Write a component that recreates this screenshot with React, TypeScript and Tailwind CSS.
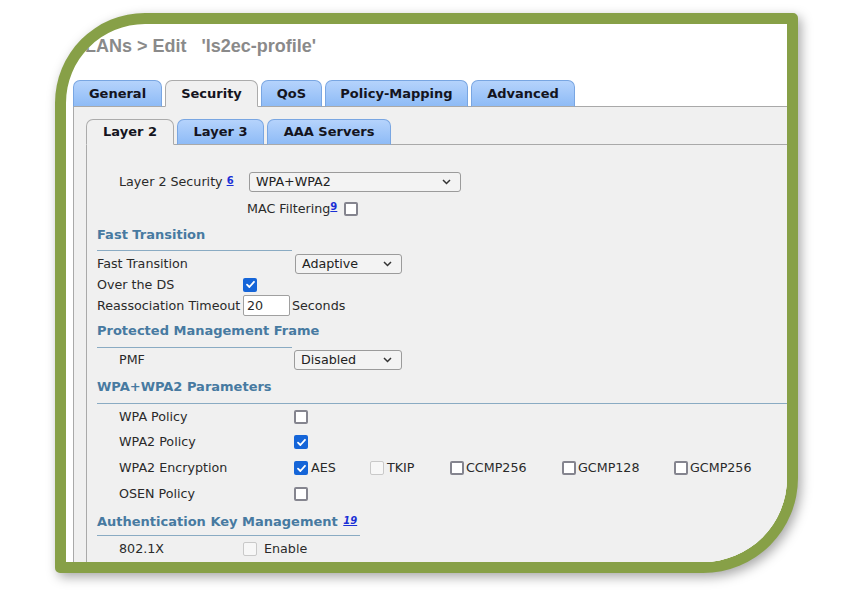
import React from "react";

const FONT = { fontFamily: '"DejaVu Sans", Verdana, sans-serif' };

function Box({ checked, disabled }: { checked?: boolean; disabled?: boolean }) {
  if (checked)
    return (
      <span className="inline-flex w-[14px] h-[14px] shrink-0 rounded-[2px] bg-[#1565d8] items-center justify-center">
        <svg width="11" height="11" viewBox="0 0 11 11">
          <path d="M2 5.6 L4.4 8 L9 2.8" stroke="white" strokeWidth="1.8" fill="none" strokeLinecap="round" strokeLinejoin="round" />
        </svg>
      </span>
    );
  if (disabled)
    return <span className="inline-block w-[14px] h-[14px] shrink-0 rounded-[2px] border border-[#c9c9c9] bg-[#f7f7f7]" />;
  return <span className="inline-block w-[14px] h-[14px] shrink-0 rounded-[2px] border-2 border-[#85858f] bg-white" />;
}

function Select({ value, w }: { value: string; w: string }) {
  return (
    <div className={`${w} h-[20px] rounded-[3px] border border-[#9b9b9b] bg-[#f3f3f3] flex items-center justify-between pl-[6px] pr-[9px] text-[#222]`}>
      <span>{value}</span>
      <svg width="9" height="6" viewBox="0 0 9 6">
        <path d="M1 1 L4.5 4.5 L8 1" stroke="#333" strokeWidth="1.5" fill="none" />
      </svg>
    </div>
  );
}

function Sup({ children, italic }: { children: React.ReactNode; italic?: boolean }) {
  return (
    <sup className={`text-[10px] font-bold underline text-[#1a2fd6] ${italic ? "italic" : ""} relative top-[-2px]`}>{children}</sup>
  );
}

function Tab({ label, w, active }: { label: string; w: string; active?: boolean }) {
  return (
    <div
      className={`${w} relative z-10 mb-[-1px] rounded-t-[7px] border flex items-center justify-center font-bold text-[13px] text-[#141420] whitespace-nowrap ${
        active
          ? "bg-[#f0f0f0] border-[#ababab] border-b-[#f0f0f0]"
          : "bg-gradient-to-b from-[#b5d3fc] to-[#8ebbf6] border-[#79a6e2] border-b-[#a9a9a9]"
      }`}
    >
      {label}
    </div>
  );
}

function Heading({ children, w, h, pt }: { children: React.ReactNode; w: string; h: string; pt: string }) {
  return (
    <div className={`${w} ${h} ${pt} border-b border-[#8aabc3] font-bold text-[13px] text-[#477aa1] leading-[16px] whitespace-nowrap`}>{children}</div>
  );
}

export default function App() {
  return (
    <div className="w-[851px] h-[600px] bg-white pt-[13px] pl-[55px]" style={FONT}>
      <div className="w-[743px] h-[560px] border-[11px] border-[#87a047] rounded-tl-[90px] rounded-br-[95px] rounded-tr-[5px] rounded-bl-[5px] overflow-hidden bg-white shadow-[3px_4px_12px_rgba(0,0,0,0.35)] flex flex-col">
        <div
          className="h-[56px] pt-[11px] pl-[2px] text-[18px] leading-[22px] font-bold text-[#8a8a8a] whitespace-pre"
          style={{ fontFamily: '"Liberation Sans", Arial, sans-serif' }}
        >
          {"WLANs > Edit   'ls2ec-profile'"}
        </div>
        <div className="flex pl-[7px] h-[26px] gap-[3px]">
          <Tab label="General" w="w-[89px]" />
          <Tab label="Security" w="w-[93px]" active />
          <Tab label="QoS" w="w-[61px]" />
          <Tab label="Policy-Mapping" w="w-[143px]" />
          <Tab label="Advanced" w="w-[104px]" />
        </div>
        <div className="ml-[7px] flex-1 border-l border-t border-[#a9a9a9] bg-[#f0f0f0] pt-[12px] pl-[12px] flex flex-col">
          <div className="flex h-[25px] gap-[3px]">
            <Tab label="Layer 2" w="w-[88px]" active />
            <Tab label="Layer 3" w="w-[87px]" />
            <Tab label="AAA Servers" w="w-[124px]" />
          </div>
          <div className="flex-1 border-l border-t border-[#a9a9a9] bg-[#f0f0f0] pl-[10px] pt-[21px] text-[12.7px] text-[#2a2a2a] leading-[16px]">
            <div className="h-[30px] flex items-center pl-[22px] pt-[2px]">
              <div className="w-[130px] flex items-center">
                <span>Layer 2 Security</span>
                <span className="ml-[4px]"><Sup>6</Sup></span>
              </div>
              <Select value="WPA+WPA2" w="w-[212px]" />
            </div>
            <div className="h-[24px] flex items-center pl-[150px] pt-[1px]">
              <span>MAC Filtering</span>
              <Sup>9</Sup>
              <span className="ml-[7px] flex"><Box /></span>
            </div>
            <Heading w="w-[195px]" h="h-[31px]" pt="pt-[7px]">Fast Transition</Heading>
            <div className="mt-[3px] h-[20px] flex items-center">
              <span className="w-[198px]">Fast Transition</span>
              <Select value="Adaptive" w="w-[107px]" />
            </div>
            <div className="h-[21px] flex items-center">
              <span className="w-[146px]">Over the DS</span>
              <Box checked />
            </div>
            <div className="h-[21px] flex items-center">
              <span className="w-[146px]">Reassociation Timeout</span>
              <div className="w-[47px] h-[21px] bg-white border border-[#a0a0a0] rounded-[2px] pl-[3px] flex items-center">20</div>
              <span className="ml-[2px]">Seconds</span>
            </div>
            <Heading w="w-[195px]" h="h-[32px]" pt="pt-[7px]">Protected Management Frame</Heading>
            <div className="h-[24px] flex items-center pl-[22px]">
              <span className="w-[175px]">PMF</span>
              <Select value="Disabled" w="w-[108px]" />
            </div>
            <Heading w="w-full" h="h-[32px]" pt="pt-[7px]">WPA+WPA2 Parameters</Heading>
            <div className="h-[25px] flex items-center pl-[22px]">
              <span className="w-[175px]">WPA Policy</span>
              <Box />
            </div>
            <div className="h-[26px] flex items-center pl-[22px]">
              <span className="w-[175px]">WPA2 Policy</span>
              <Box checked />
            </div>
            <div className="h-[26px] flex items-center pl-[22px]">
              <span className="w-[175px]">WPA2 Encryption</span>
              <div className="w-[76px] flex items-center"><Box checked /><span className="ml-[3px]">AES</span></div>
              <div className="w-[80px] flex items-center"><Box disabled /><span className="ml-[3px]">TKIP</span></div>
              <div className="w-[112px] flex items-center"><Box /><span className="ml-[2px]">CCMP256</span></div>
              <div className="w-[112px] flex items-center"><Box /><span className="ml-[2px]">GCMP128</span></div>
              <div className="w-[112px] flex items-center"><Box /><span className="ml-[2px]">GCMP256</span></div>
            </div>
            <div className="h-[25px] flex items-center pl-[22px]">
              <span className="w-[175px]">OSEN Policy</span>
              <Box />
            </div>
            <Heading w="w-[263px]" h="h-[30px]" pt="pt-[8px]">
              Authentication Key Management <span className="ml-[1px]"><Sup italic>19</Sup></span>
            </Heading>
            <div className="h-[26px] flex items-center pl-[22px]">
              <span className="w-[124px]">802.1X</span>
              <Box disabled />
              <span className="ml-[7px]">Enable</span>
            </div>
          </div>
        </div>
      </div>
    </div>
  );
}
